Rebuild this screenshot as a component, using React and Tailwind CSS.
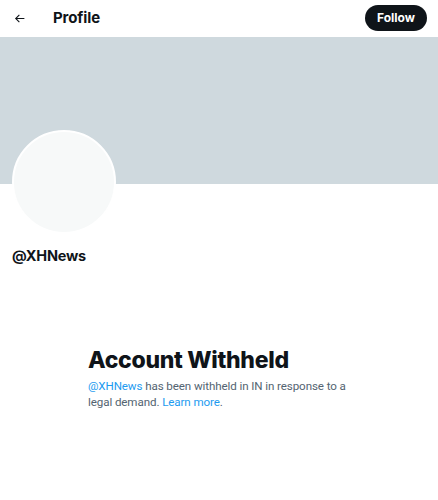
export default function App() {
  return (
    <div className="w-[438px] h-[500px] bg-white overflow-hidden" style={{ fontFamily: 'Inter, "Noto Sans", sans-serif' }}>
      <div className="h-[37px] flex items-center justify-between pl-[13px] pr-[11px]">
        <div className="flex items-center">
          <svg width="13" height="13" viewBox="0 0 24 24" className="text-[#0f1419]">
            <path fill="currentColor" d="M7.414 13l5.043 5.04-1.414 1.42L3.586 12l7.457-7.46 1.414 1.42L7.414 11H21v2H7.414z" />
          </svg>
          <span className="ml-[27px] text-[15px] font-bold text-[#0f1419] tracking-[-0.1px]">Profile</span>
        </div>
        <button className="-mt-[2px] h-[26px] px-[12px] rounded-full bg-[#0f1419] text-white text-[12px] font-bold">Follow</button>
      </div>
      <div className="h-[147px] bg-[#cfd9de]" />
      <div className="px-[12px]">
        <div className="-mt-[54px] w-[104px] h-[104px] rounded-full bg-[#f7f9f9] border-[2px] border-white" />
        <div className="mt-[11px] text-[14.5px] font-bold text-[#0f1419] tracking-[-0.2px]">@XHNews</div>
      </div>
      <div className="ml-[88px] w-[268px] mt-[79px]">
        <div className="text-[23px] leading-[28px] font-extrabold text-[#0f1419] tracking-[-0.3px]">Account Withheld</div>
        <p className="mt-[4px] text-[11.6px] leading-[16px] text-[#536471] tracking-[-0.1px]" style={{ fontFamily: 'Roboto, "Noto Sans", sans-serif' }}>
          <span className="text-[#1d9bf0]">@XHNews</span> has been withheld in IN in response to a legal demand. <span className="text-[#1d9bf0]">Learn more</span>.
        </p>
      </div>
    </div>
  );
}
